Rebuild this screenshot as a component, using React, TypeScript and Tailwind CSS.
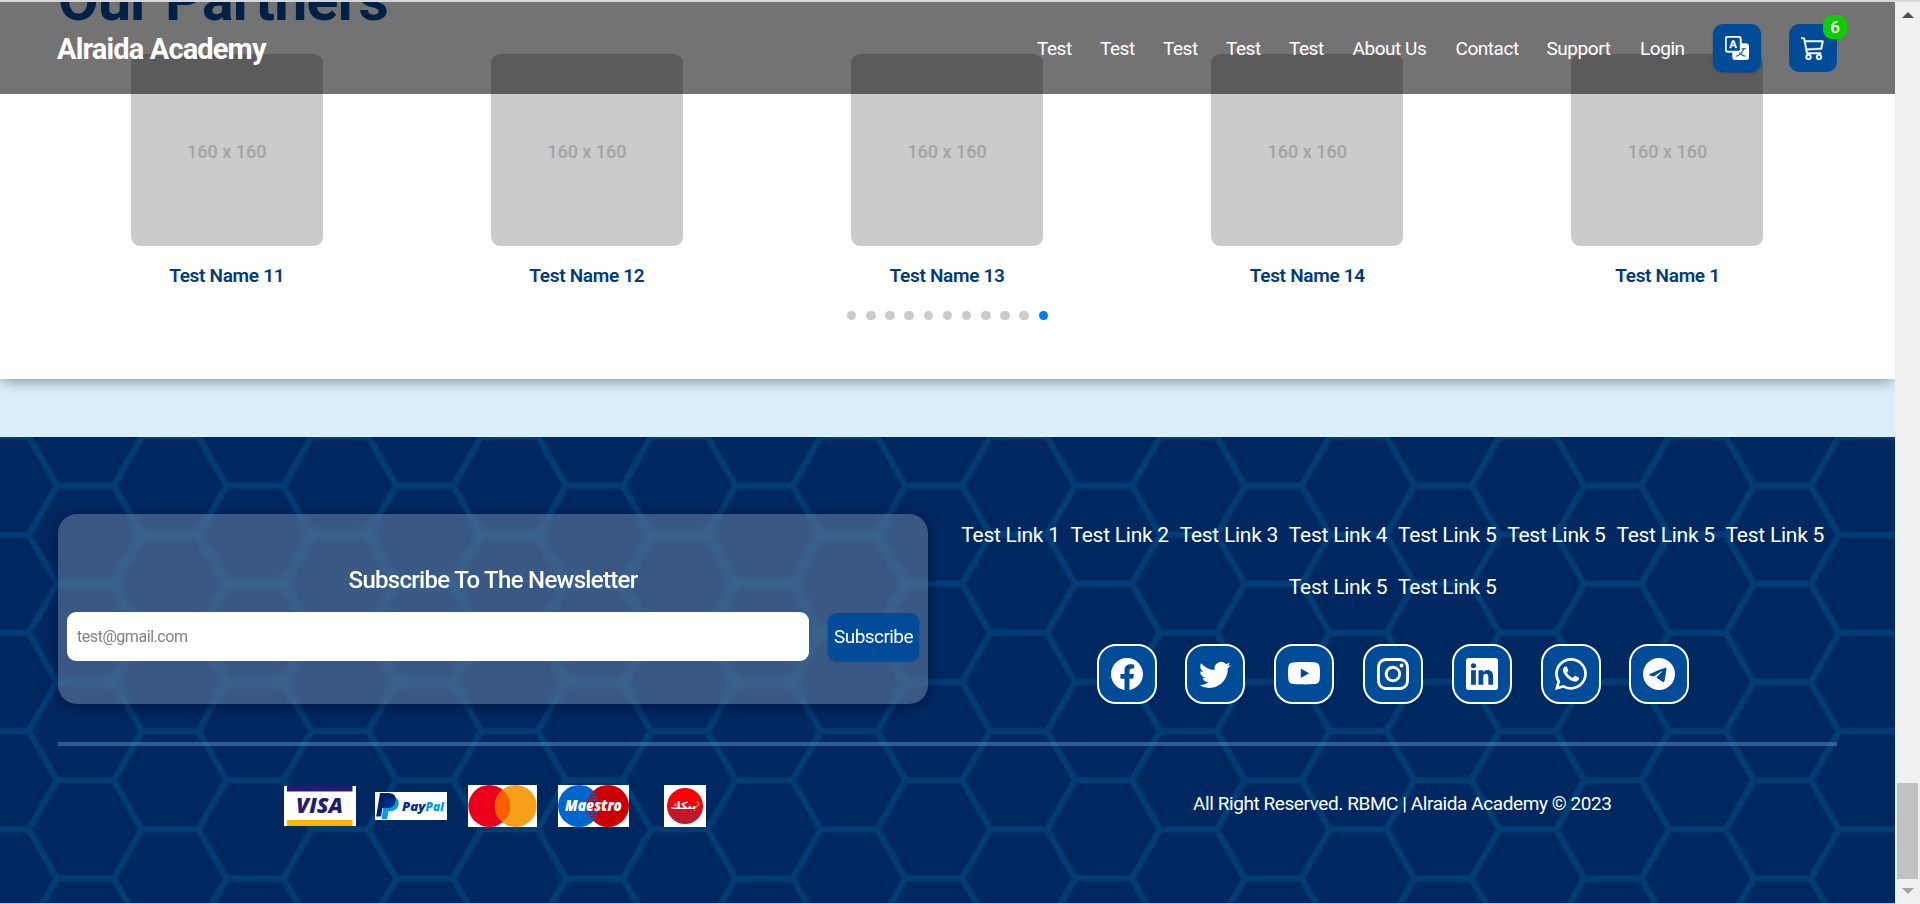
import React from "react";
import {
  BsCart3,
  BsFacebook,
  BsInstagram,
  BsLinkedin,
  BsTelegram,
  BsTranslate,
  BsTwitter,
  BsWhatsapp,
  BsYoutube,
} from "react-icons/bs";

const navLinks = [
  { label: "Test", box: "w-[63px]" },
  { label: "Test", box: "w-[63px]" },
  { label: "Test", box: "w-[63px]" },
  { label: "Test", box: "w-[63px]" },
  { label: "Test", box: "w-[63.5px]" },
  { label: "About Us", box: "w-[103px]" },
  { label: "Contact", box: "w-[91px]" },
  { label: "Support", box: "w-[93.500px]" },
  { label: "Login", box: "w-[73px]" },
];

const partners = ["Test Name 11", "Test Name 12", "Test Name 13", "Test Name 14", "Test Name 1"];

const footerLinks = [
  "Test Link 1",
  "Test Link 2",
  "Test Link 3",
  "Test Link 4",
  "Test Link 5",
  "Test Link 5",
  "Test Link 5",
  "Test Link 5",
  "Test Link 5",
  "Test Link 5",
];

const socials = [BsFacebook, BsTwitter, BsYoutube, BsInstagram, BsLinkedin, BsWhatsapp, BsTelegram];

function Header() {
  return (
    <header className="absolute inset-x-0 top-0 z-10 flex h-[94px] items-center border-t-2 border-[#d5d7d8] bg-black/55 bg-clip-padding pr-[58px] pl-[57px] text-white">
      <div className="pt-0.5 text-[29px] leading-none font-bold tracking-[-0.85px]">Alraida Academy</div>
      <nav className="ml-auto flex text-[19px] leading-none tracking-[-0.45px]">
        {navLinks.map((l, i) => (
          <a key={i} className={`${l.box} whitespace-nowrap`}>
            {l.label}
          </a>
        ))}
      </nav>
      <button className="flex size-12 items-center justify-center rounded-[10px] bg-[#004c99] shadow-[0_1px_2px_rgba(0,50,110,0.5)]">
        <BsTranslate className="size-6" stroke="currentColor" strokeWidth="0.3" />
      </button>
      <button className="relative ml-7 flex size-12 items-center justify-center rounded-[10px] bg-[#004c99]">
        <BsCart3 className="size-6" stroke="currentColor" strokeWidth="0.3" />
        <span className="absolute -top-[9px] -right-[10px] flex size-6 items-center justify-center rounded-[9px] bg-[#0fce00] text-[17px] leading-none font-medium">
          6
        </span>
      </button>
    </header>
  );
}

function Partners() {
  return (
    <section className="relative z-[1] h-[379px] overflow-hidden bg-white">
      <h2 className="-mt-[34px] h-[88px] pl-[58px] text-[59px] leading-[68px] font-bold tracking-[-0.75px] text-[#004a9b]">
        Our Partners
      </h2>
      <div className="ml-[46.6px] grid w-[1801px] grid-cols-5">
        {partners.map((name) => (
          <div key={name} className="flex flex-col items-center">
            <div className="flex size-48 items-center justify-center rounded-[9px] bg-[#cbcbcb] pt-0.5 text-[18px] font-medium text-[#a3a3a3]">
              160 x 160
            </div>
            <div className="mt-5 text-[19px] leading-5 font-semibold tracking-[-0.3px] text-[#003a7e]">{name}</div>
          </div>
        ))}
      </div>
      <div className="mt-[24.5px] flex justify-center gap-[9.6px]">
        {Array.from({ length: 11 }, (_, i) => (
          <span key={i} className={i === 10 ? "size-[9.6px] rounded-full bg-[#007aff]" : "size-[9.6px] rounded-full bg-[#cbcbcb]"} />
        ))}
      </div>
    </section>
  );
}

function HexBackground() {
  return (
    <svg className="absolute inset-0 size-full" aria-hidden="true">
      <defs>
        <pattern id="hex" width="169.7" height="98.2" patternUnits="userSpaceOnUse" x="0" y="-0.5">
          <path
            d="M-2 0H28.6L56.9 49.1H113.6L141.9 0H172M-2 98.2H28.6L56.9 49.1M113.6 49.1L141.9 98.2H172"
            fill="none"
            stroke="#003d75"
            strokeWidth="6"
            strokeLinejoin="round"
          />
        </pattern>
      </defs>
      <rect width="100%" height="100%" fill="url(#hex)" />
    </svg>
  );
}

function Newsletter() {
  return (
    <div className="h-[190px] w-[870px] rounded-[19px] bg-white/[.225] px-[9px] pt-[54px] shadow-[0_3px_14px_rgba(0,10,40,0.5)] backdrop-blur-[4px]">
      <h3 className="text-center text-[24px] leading-6 font-medium tracking-[-0.7px]">Subscribe To The Newsletter</h3>
      <div className="mt-5 flex items-center justify-between">
        <input
          className="h-[49px] w-[742px] rounded-[9px] bg-white px-2.5 text-[16px] tracking-[-0.45px] placeholder:text-[#808080]"
          placeholder="test@gmail.com"
        />
        <button className="h-[48px] w-[91px] rounded-[9px] bg-[#004c99] text-[19px] leading-none tracking-[-0.55px] shadow-[0_1px_2px_rgba(0,50,110,0.5)]">
          Subscribe
        </button>
      </div>
    </div>
  );
}

function Visa() {
  return (
    <svg className="h-10 w-[72px]" viewBox="0 0 72 40">
      <rect width="72" height="40" fill="#fff" />
      <rect x="3" width="65.500" height="5.500" fill="#231c72" />
      <rect x="3" y="34" width="65.500" height="6" fill="#f8b600" />
      <text x="12" y="26.500" fontFamily="Open Sans, sans-serif" fontWeight="800" fontStyle="italic" fontSize="20.500" textLength="47" lengthAdjust="spacingAndGlyphs" fill="#231c72">
        VISA
      </text>
    </svg>
  );
}

function PayPal() {
  return (
    <svg className="ml-[19px] h-7 w-[72px]" viewBox="0 0 72 28">
      <rect width="72" height="28" fill="#fff" />
      <path d="M10 5H19Q25 7 23.500 13T15 19H13.500L12 27H6.500Z" fill="#009cde" />
      <path d="M5 1H14Q22 1.500 20.500 9T12 16H7.500L6 24.500H1.200Z" fill="#012169" />
      <path d="M10 7H20.700Q20 15.500 12 16H8.600Z" fill="#003087" />
      <text y="18.500" fontFamily="Open Sans, sans-serif" fontWeight="800" fontStyle="italic" fontSize="12.500">
        <tspan x="27" fill="#002d8a" textLength="23.500" lengthAdjust="spacingAndGlyphs">Pay</tspan>
        <tspan x="50.500" fill="#009cde" textLength="18.500" lengthAdjust="spacingAndGlyphs">Pal</tspan>
      </text>
    </svg>
  );
}

function Mastercard() {
  return (
    <svg className="ml-[21px] h-[42px] w-[69px]" viewBox="0 0 69 42">
      <rect width="69" height="42" fill="#fff" />
      <circle cx="21.300" cy="21" r="21" fill="#eb001b" />
      <circle cx="47.700" cy="21" r="21" fill="#f79e1b" />
      <path d="M34.500 4.700A21 21 0 0 1 34.500 37.300A21 21 0 0 1 34.500 4.700Z" fill="#ff5f00" />
    </svg>
  );
}

function Maestro() {
  return (
    <svg className="ml-[21px] h-[42px] w-[71px]" viewBox="0 0 71 42">
      <rect width="71" height="42" fill="#fff" />
      <circle cx="21" cy="21" r="21" fill="#0066cb" />
      <circle cx="50" cy="21" r="21" fill="#cc0000" />
      <path d="M33 9H38M31 12H39M31 15H40M31 27.500H40M31 30.500H39M33 33.500H38" stroke="#0066cb" strokeWidth="1.300" />
      <text x="7" y="26" fontFamily="Open Sans, sans-serif" fontWeight="800" fontStyle="italic" fontSize="15" textLength="57" lengthAdjust="spacingAndGlyphs" fill="#fff">
        Maestro
      </text>
    </svg>
  );
}

function Bankak() {
  return (
    <svg className="ml-[35px] size-[42px]" viewBox="0 0 42 42">
      <defs>
        <linearGradient id="bankak" x1="0" y1="0" x2="0" y2="1">
          <stop offset="0.300" stopColor="#fb0007" />
          <stop offset="0.800" stopColor="#bd1a2c" />
        </linearGradient>
      </defs>
      <rect width="42" height="42" fill="#fff" />
      <circle cx="21" cy="21" r="18" fill="url(#bankak)" />
      <text x="19.500" y="24" textAnchor="middle" fontFamily="DejaVu Sans, sans-serif" fontWeight="700" fontSize="10" textLength="26" lengthAdjust="spacingAndGlyphs" fill="#fff">
        بنكك
      </text>
      <path d="M33 16L35 19L31.500 23" fill="none" stroke="#c58b2a" strokeWidth="1.400" />
    </svg>
  );
}

function Footer() {
  return (
    <footer className="relative mt-[58px] h-[467px] overflow-hidden border-b border-[#b4c5d6] bg-[#002860] px-[58px] pt-[77px] text-white">
      <HexBackground />
      <div className="relative flex">
        <Newsletter />
        <div className="ml-[27px] w-[876px] shrink-0">
          <div className="flex flex-wrap justify-center pt-[9px] text-[21px] leading-[52px] tracking-[-0.25px]">
            {footerLinks.map((label, i) => (
              <a key={i} className="-mt-[14px] mb-[14px] w-[109.2px] pl-[5px] whitespace-nowrap">
                {label}
              </a>
            ))}
          </div>
          <div className="mt-[17px] flex justify-center gap-[28.8px]">
            {socials.map((Icon, i) => (
              <a key={i} className="flex size-[60px] items-center justify-center rounded-[19px] border-2 border-white bg-[#004c99]">
                <Icon className="size-8" />
              </a>
            ))}
          </div>
        </div>
      </div>
      <div className="relative mt-[38px] h-1 bg-[#5088bf]/55" />
      <div className="relative mt-[39px] flex h-[42px] items-center pl-[226px]">
        <Visa />
        <PayPal />
        <Mastercard />
        <Maestro />
        <Bankak />
        <p className="-mt-[6px] ml-[487px] text-[19px] leading-none tracking-[-0.42px] whitespace-nowrap">
          All Right Reserved. RBMC | Alraida Academy © 2023
        </p>
      </div>
    </footer>
  );
}

function Scrollbar() {
  return (
    <div className="flex h-[904px] w-[25px] flex-col items-center border-t-2 border-[#d5d7d8] bg-[#f0f0f0]">
      <svg className="mt-2.5 h-1.5 w-3" viewBox="0 0 12 6">
        <path d="M6 0L12 6H0Z" fill="#505050" />
      </svg>
      <div className="mt-auto h-24 w-[21px] bg-[#c1c1c1]" />
      <svg className="mt-[9px] mb-[10px] h-1.5 w-3" viewBox="0 0 12 6">
        <path d="M0 0H12L6 6Z" fill="#a3a3a3" />
      </svg>
    </div>
  );
}

export default function App() {
  return (
    <div className="flex h-[904px] w-[1920px] overflow-hidden font-['Roboto',sans-serif]">
      <main className="relative w-[1895px] overflow-hidden bg-[#dbeff9]">
        <Header />
        <div className="relative z-[1] shadow-[0_3px_14px_-2px_rgba(60,80,80,0.65)]">
          <Partners />
        </div>
        <Footer />
      </main>
      <Scrollbar />
    </div>
  );
}
